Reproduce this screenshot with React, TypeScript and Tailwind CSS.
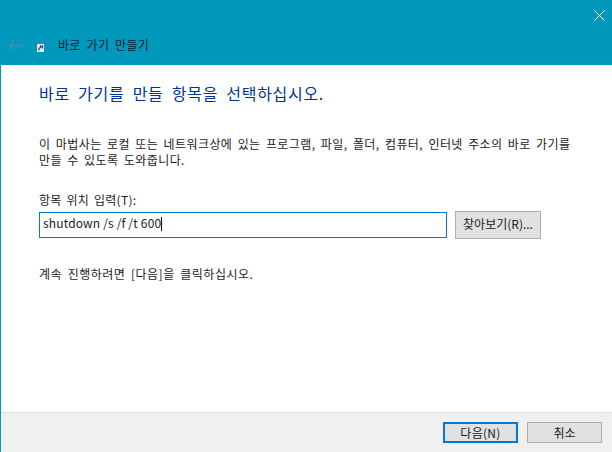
import React from 'react';

const font = "font-['Noto_Sans_CJK_KR','Noto_Sans',sans-serif]";

export default function App() {
  return (
    <div className={`${font} flex h-[452px] w-[612px] flex-col overflow-hidden border-l border-[#0099bc] bg-white text-[12px] text-[#1a1a1a]`}>
      {/* Title bar */}
      <div className="flex h-[65px] shrink-0 flex-col bg-[#0099bc]">
        <div className="flex h-[30px] justify-end pr-[7px] pt-[10px]">
          <svg width="11" height="11" viewBox="0 0 11 11" className="text-white">
            <path d="M0.5 0.5L10.5 10.5M10.5 0.5L0.5 10.5" stroke="currentColor" strokeWidth="1" fill="none" />
          </svg>
        </div>
        <div className="flex items-center pl-[8px] pt-[6px]">
          <svg width="13" height="11" viewBox="0 0 13 11" className="text-[#4a8ea6]">
            <path d="M5.5 0.5L1 5.5L5.5 10.5M1 5.5H13" stroke="currentColor" strokeWidth="1.3" fill="none" />
          </svg>
          <svg width="7" height="8" viewBox="0 0 7 8" className="ml-[15px] mt-[5px]">
            <rect width="7" height="8" fill="#e8e8e8" />
            <path d="M2 6.5V4.5L4.5 2.5M3 2H5.5V4.5" stroke="#1f3f8f" strokeWidth="1.2" fill="none" />
          </svg>
          <span className="ml-[14px] text-[12px] leading-[18px] tracking-[0.4px] text-[#06202a] [word-spacing:2.5px]">바로 가기 만들기</span>
        </div>
      </div>

      {/* Wizard body */}
      <div className="flex min-h-0 flex-1 flex-col pl-[38px] pt-[17px]">
        <h1 className="text-[16px] font-normal leading-[22px] tracking-[0.7px] text-[#003399] [word-spacing:4px]">바로 가기를 만들 항목을 선택하십시오.</h1>
        <p className="mt-[32px] w-[542px] text-[12px] leading-[16px] tracking-[0.43px] [word-spacing:2.2px]">
          이 마법사는 로컬 또는 네트워크상에 있는 프로그램, 파일, 폴더, 컴퓨터, 인터넷 주소의 바로 가기를 만들 수 있도록 도와줍니다.
        </p>
        <label className="mt-[24px] block text-[12px] leading-[16px] tracking-[0.3px] [word-spacing:1.8px]">항목 위치 입력(T):</label>
        <div className="mt-[3px] flex items-center">
          <div className="flex h-[26px] w-[408px] items-center border border-[#0078d7] pb-[5px] pl-[3px] text-[12px] tracking-[0.15px]">
            <span>shutdown /s /f /t 600</span>
            <span className="mt-[3px] h-[14px] w-px bg-black" />
          </div>
          <button className="ml-[8px] h-[28px] w-[86px] border border-[#adadad] bg-[#e1e1e1] pb-[2px] text-[12px]">찾아보기(R)...</button>
        </div>
        <p className="mt-[27px] text-[12px] leading-[16px] tracking-[0.5px] [word-spacing:2.4px]">계속 진행하려면 [다음]을 클릭하십시오.</p>
      </div>

      {/* Footer */}
      <div className="flex h-[40px] shrink-0 justify-end gap-[9px] border-t border-[#dfdfdf] bg-[#f0f0f0] pr-[10px] pt-[9px]">
        <button className="h-[21px] w-[75px] border-2 border-[#0078d7] bg-[#e1e1e1] text-[12px] leading-none tracking-[0.3px]">다음(N)</button>
        <button className="h-[21px] w-[75px] border border-[#adadad] bg-[#e1e1e1] text-[12px] leading-none">취소</button>
      </div>
    </div>
  );
}
